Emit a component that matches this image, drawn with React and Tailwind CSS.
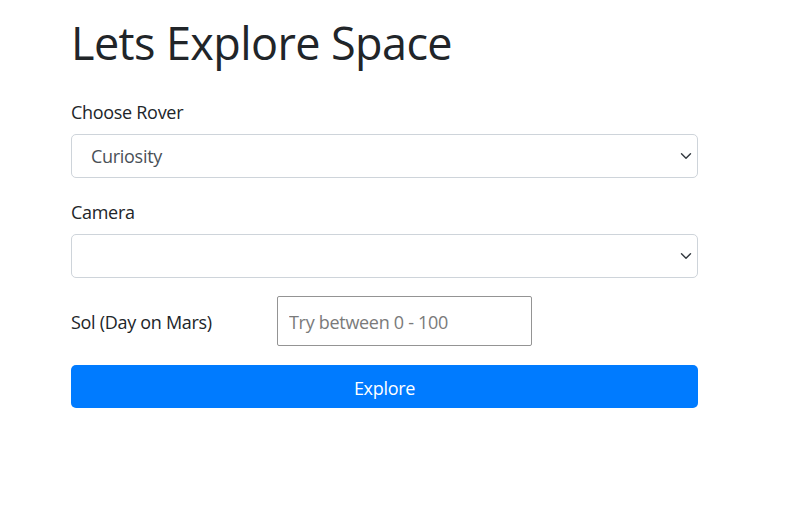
import { useState } from "react";

function Chevron() {
  return (
    <svg
      className="pointer-events-none absolute right-[4px] top-1/2 -translate-y-1/2"
      width="16"
      height="12"
      viewBox="0 0 16 16"
    >
      <path
        d="m2 5 6 6 6-6"
        fill="none"
        stroke="#343a40"
        strokeWidth="1.9"
        strokeLinecap="round"
        strokeLinejoin="round"
      />
    </svg>
  );
}

export default function App() {
  const [rover, setRover] = useState("curiosity");
  const [camera, setCamera] = useState("");
  const [sol, setSol] = useState("");

  return (
    <div className="min-h-screen bg-white font-['Open_Sans',sans-serif] text-[#212529]">
      <div className="ml-[71px] w-[627px] pt-[16px]">
        <h1 className="text-[45px] leading-[54px] font-normal tracking-[-0.6px]">
          Lets Explore Space
        </h1>

        <div className="mt-[29px]">
          <label className="block text-[18px] leading-[27px] tracking-[-0.3px]">
            Choose Rover
          </label>
          <div className="relative mt-[8px]">
            <select
              value={rover}
              onChange={(e) => setRover(e.target.value)}
              className="block h-[44px] w-full appearance-none rounded-[5px] border border-[#ced4da] bg-white pl-[19px] pr-10 text-[18px] text-[#495057] outline-none tracking-[-0.3px]"
            >
              <option value="curiosity">Curiosity</option>
              <option value="opportunity">Opportunity</option>
              <option value="spirit">Spirit</option>
            </select>
            <Chevron />
          </div>
        </div>

        <div className="mt-[21px]">
          <label className="block text-[18px] leading-[27px] tracking-[-0.3px]">
            Camera
          </label>
          <div className="relative mt-[8px]">
            <select
              value={camera}
              onChange={(e) => setCamera(e.target.value)}
              className="block h-[44px] w-full appearance-none rounded-[5px] border border-[#ced4da] bg-white pl-[19px] pr-10 text-[18px] text-[#495057] outline-none"
            >
              <option value=""></option>
            </select>
            <Chevron />
          </div>
        </div>

        <div className="mt-[18px] flex items-center">
          <label className="w-[206px] pt-[2px] text-[18px] leading-[27px] tracking-[-0.3px]">
            Sol (Day on Mars)
          </label>
          <input
            type="text"
            value={sol}
            onChange={(e) => setSol(e.target.value)}
            placeholder="Try between 0 - 100"
            className="h-[50px] w-[255px] rounded-[2px] border border-[#949494] px-[11px] pt-[2px] text-[18px] tracking-[-0.3px] text-[#495057] outline-none placeholder:text-[#7a7a7a]"
          />
        </div>

        <button className="mt-[19px] h-[43px] w-full rounded-[5px] bg-[#007bff] pt-[3px] text-[18px] tracking-[-0.3px] text-white">
          Explore
        </button>
      </div>
    </div>
  );
}
